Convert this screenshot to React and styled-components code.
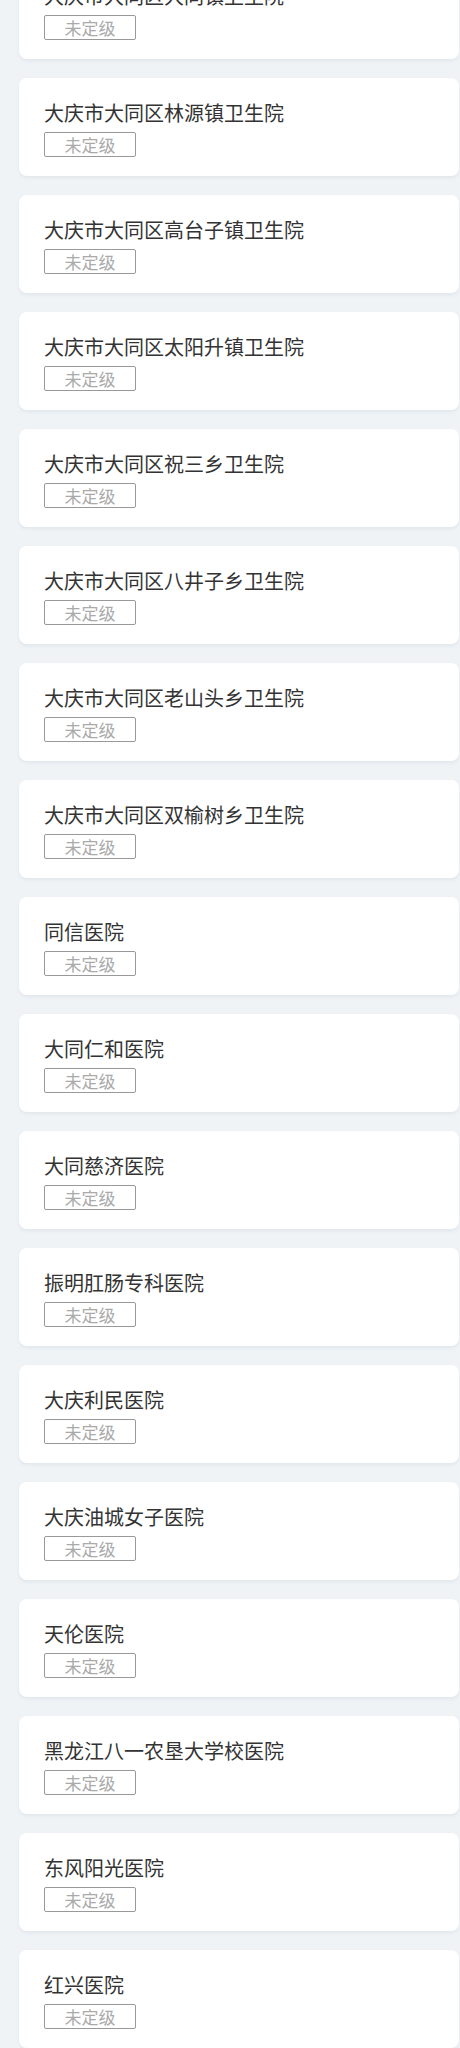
import React from 'react';
import styled, { createGlobalStyle } from 'styled-components';

const hospitals = [
    '大庆市大同区大同镇卫生院',
    '大庆市大同区林源镇卫生院',
    '大庆市大同区高台子镇卫生院',
    '大庆市大同区太阳升镇卫生院',
    '大庆市大同区祝三乡卫生院',
    '大庆市大同区八井子乡卫生院',
    '大庆市大同区老山头乡卫生院',
    '大庆市大同区双榆树乡卫生院',
    '同信医院',
    '大同仁和医院',
    '大同慈济医院',
    '振明肛肠专科医院',
    '大庆利民医院',
    '大庆油城女子医院',
    '天伦医院',
    '黑龙江八一农垦大学校医院',
    '东风阳光医院',
    '红兴医院',
];

const GlobalStyle = createGlobalStyle`
    body{
        margin: 0;
        background: #eff3f6;
        font-family: "Noto Sans CJK SC", "Noto Sans", sans-serif;
    }
`

const App = () =>{
    return(
        <>
            <GlobalStyle />
            <List>
                {hospitals.map((name) => (
                    <Card key={name}>
                        <Title>{name}</Title>
                        <Level>未定级</Level>
                    </Card>
                ))}
            </List>
        </>
    )
}

export default App

const List = styled.div`
    display: flex;
    flex-direction: column;
    gap: 19px;
    margin-top: -39px;
    padding: 0 1px 0 19px;
`

const Card = styled.div`
    height: 98px;
    box-sizing: border-box;
    padding: 21px 25px 0;
    background: #fff;
    border-radius: 8px;
    box-shadow: 0 2px 3px rgba(200, 210, 220, 0.35);
    display: flex;
    flex-direction: column;
    align-items: flex-start;
`

const Title = styled.div`
    font-size: 20px;
    line-height: 28px;
    color: #333;
    white-space: nowrap;
`

const Level = styled.span`
    margin-top: 5px;
    width: 92px;
    height: 25px;
    box-sizing: border-box;
    border: 1px solid #999;
    border-radius: 2px;
    font-size: 17px;
    line-height: 23px;
    text-align: center;
    color: #aaa;
`
